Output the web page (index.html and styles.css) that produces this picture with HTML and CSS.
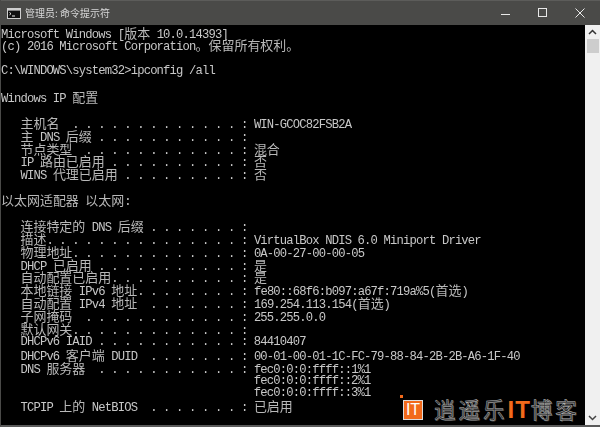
FILE: index.html
```html
<!DOCTYPE html>
<html lang="zh">
<head>
<meta charset="utf-8">
<title>管理员: 命令提示符</title>
<link rel="stylesheet" href="styles.css">
</head>
<body>
<div class="window">
  <header class="titlebar">
    <svg class="appicon" width="14" height="11" viewBox="0 0 14 11"><rect x=".5" y=".5" width="13" height="10" fill="#111" stroke="#cfcfcf"/><rect x="1" y="1" width="12" height="1.6" fill="#cfcfcf"/><path d="M2.5 4.5l1.5 1.2-1.5 1.2M5 8h3" fill="none" stroke="#eee" stroke-width="1"/></svg>
    <span class="title">管理员: 命令提示符</span>
    <div class="controls">
      <svg width="10" height="10" viewBox="0 0 10 10"><path d="M0 6.500h9" stroke="#e8e8e8" stroke-width="1"/></svg>
      <svg width="10" height="10" viewBox="0 0 10 10"><rect x=".5" y=".5" width="8" height="8" fill="none" stroke="#e8e8e8"/></svg>
      <svg width="10" height="10" viewBox="0 0 10 10"><path d="M.5.5l9 9M9.500.5l-9 9" stroke="#e8e8e8" stroke-width="1"/></svg>
    </div>
  </header>
  <div class="body">
    <main class="console">
      <div class="line">Microsoft Windows [<span class="c">版本</span> 10.0.14393]</div>
      <div class="line">(c) 2016 Microsoft Corporation<span class="c">。保留所有权利。</span></div>
      <div class="line"></div>
      <div class="line">C:\WINDOWS\system32&gt;ipconfig /all</div>
      <div class="line"></div>
      <div class="line">Windows IP <span class="c">配置</span></div>
      <div class="line"></div>
      <div class="line">   <span class="c">主机名</span>  . . . . . . . . . . . . . : WIN-GCOC82FSB2A</div>
      <div class="line">   <span class="c">主</span> DNS <span class="c">后缀</span> . . . . . . . . . . . : </div>
      <div class="line">   <span class="c">节点类型</span>  . . . . . . . . . . . . : <span class="c">混合</span></div>
      <div class="line">   IP <span class="c">路由已启用</span> . . . . . . . . . . : <span class="c">否</span></div>
      <div class="line">   WINS <span class="c">代理已启用</span> . . . . . . . . . : <span class="c">否</span></div>
      <div class="line"></div>
      <div class="line"><span class="c">以太网适配器</span> <span class="c">以太网</span>:</div>
      <div class="line"></div>
      <div class="line">   <span class="c">连接特定的</span> DNS <span class="c">后缀</span> . . . . . . . : </div>
      <div class="line">   <span class="c">描述</span>. . . . . . . . . . . . . . . : VirtualBox NDIS 6.0 Miniport Driver</div>
      <div class="line">   <span class="c">物理地址</span>. . . . . . . . . . . . . : 0A-00-27-00-00-05</div>
      <div class="line">   DHCP <span class="c">已启用</span> . . . . . . . . . . . : <span class="c">是</span></div>
      <div class="line">   <span class="c">自动配置已启用</span>. . . . . . . . . . : <span class="c">是</span></div>
      <div class="line">   <span class="c">本地链接</span> IPv6 <span class="c">地址</span>. . . . . . . . : fe80::68f6:b097:a67f:719a%5(<span class="c">首选</span>)</div>
      <div class="line">   <span class="c">自动配置</span> IPv4 <span class="c">地址</span>  . . . . . . . : 169.254.113.154(<span class="c">首选</span>)</div>
      <div class="line">   <span class="c">子网掩码</span>  . . . . . . . . . . . . : 255.255.0.0</div>
      <div class="line">   <span class="c">默认网关</span>. . . . . . . . . . . . . : </div>
      <div class="line">   DHCPv6 IAID . . . . . . . . . . . : 84410407</div>
      <div class="line">   DHCPv6 <span class="c">客户端</span> DUID  . . . . . . . : 00-01-00-01-1C-FC-79-88-84-2B-2B-A6-1F-40</div>
      <div class="line">   DNS <span class="c">服务器</span>  . . . . . . . . . . . : fec0:0:0:ffff::1%1</div>
      <div class="line">                                       fec0:0:0:ffff::2%1</div>
      <div class="line">                                       fec0:0:0:ffff::3%1</div>
      <div class="line">   TCPIP <span class="c">上的</span> NetBIOS  . . . . . . . : <span class="c">已启用</span></div>
      <div class="logo">
        <span class="logo-mark">IT</span>
        <span class="logo-text">逍遥乐<b class="logo-it">IT</b>博客</span>
      </div>
    </main>
    <aside class="scrollbar">
      <svg class="arrow-up" width="9" height="6" viewBox="0 0 9 6"><path d="M1 5l3.500-3.500L8 5" fill="none" stroke="#333" stroke-width="1.500"/></svg>
      <div class="thumb"></div>
      <div class="track"></div>
      <svg class="arrow-down" width="9" height="6" viewBox="0 0 9 6"><path d="M1 1l3.500 3.500L8 1" fill="none" stroke="#444" stroke-width="1.500"/></svg>
    </aside>
  </div>
</div>
</body>
</html>
```
FILE: styles.css
```css
* { box-sizing: border-box; }
html, body { margin: 0; padding: 0; background: #000; }
.window {
  width: 600px;
  height: 427px;
  display: flex;
  flex-direction: column;
  overflow: hidden;
  border-bottom: 2px solid #5a5a5a;
  border-left: 1px solid #4a4a48;
}
.titlebar {
  height: 25px;
  flex: none;
  display: flex;
  align-items: center;
  padding-left: 6px;
  background: #4a4a48;
  border-top: 1px solid #5c5c5a;
}
.appicon { flex: none; }
.title {
  margin-left: 4px;
  font: 10px/1 "Noto Sans CJK SC", sans-serif;
  color: #d8d8d8;
  filter: blur(.3px);
}
.controls {
  margin-left: auto;
  display: flex;
  align-items: center;
  gap: 27px;
  padding-right: 15px;
}
.body { flex: 1; display: flex; min-height: 0; }
.console {
  position: relative;
  flex: 1;
  padding-top: 1.500px;
  background: #000;
  color: #c8c8c8;
  font: 12.2px/12.9px "Liberation Mono", "Noto Sans CJK SC", monospace;
  letter-spacing: -.83px;
  overflow: hidden;
}
.line { height: 12.9px; white-space: pre; filter: blur(.25px); }
.c {
  font-family: "Noto Sans CJK SC", sans-serif;
  font-size: 12.98px;
  line-height: 12px;
  letter-spacing: 0;
  color: #b8b8b8;
}
.scrollbar {
  flex: none;
  width: 15px;
  display: flex;
  flex-direction: column;
  align-items: center;
  background: #f0f0f0;
}
.arrow-up { flex: none; margin: 4px 0; }
.arrow-down { flex: none; margin: 0 0 4px; }
.thumb { flex: none; width: 12px; height: 14px; margin-left: 1px; background: #cdcdcd; }
.track { flex: 1; }
.logo {
  position: absolute;
  left: 402px;
  top: 373px;
  display: flex;
  align-items: center;
  gap: 11px;
  letter-spacing: 0;
}
.logo-mark {
  width: 20px;
  height: 20px;
  background: #f26a1b;
  border: 1px solid #ddd;
  color: #fff;
  font: 16px/18px "Liberation Sans", sans-serif;
  text-align: center;
}
.logo-mark::before {
  content: "";
  position: absolute;
  left: -3px;
  top: -3px;
  width: 3px;
  height: 3px;
  background: #f26a1b;
}
.logo-text {
  font: 400 21.5px/22px "Noto Sans CJK SC", sans-serif;
  letter-spacing: 3px;
  color: #2c2c2c;
  -webkit-text-stroke: .5px #b4b4b4;
  text-shadow: 1px 1px 0 #444;
}
.logo-it {
  font: 700 24px/22px "Liberation Sans", sans-serif;
  color: #f26a1b;
  letter-spacing: 1px;
  -webkit-text-stroke: 0;
  text-shadow: none;
}
```
